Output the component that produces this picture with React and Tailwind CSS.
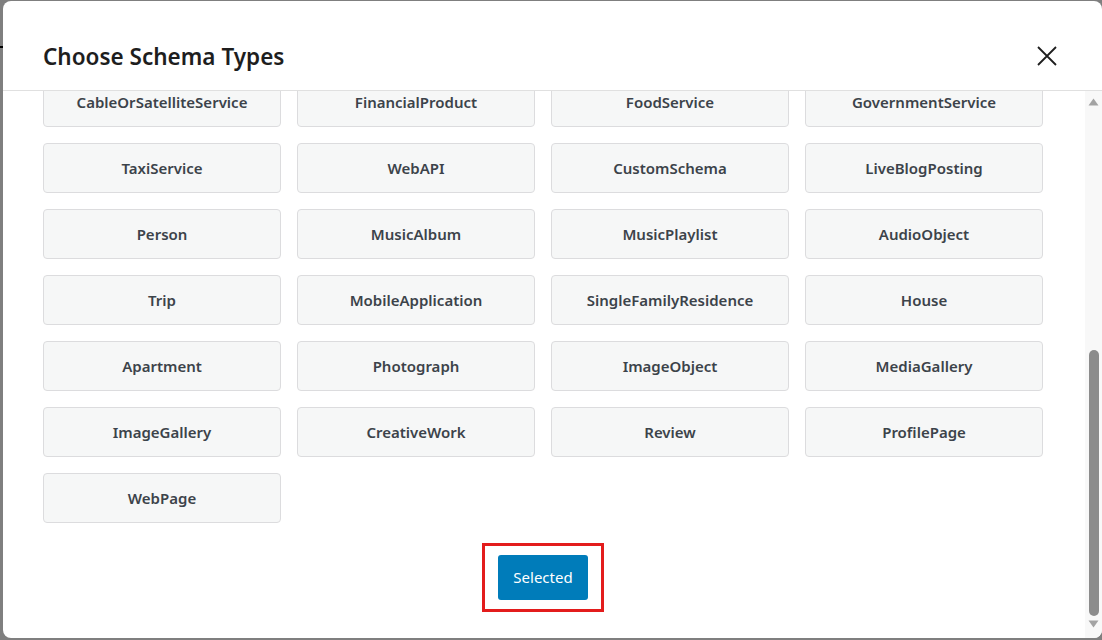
import { useLayoutEffect, useRef } from "react";

const tiposArriba = [
  "Article", "BlogPosting", "NewsArticle", "Event",
  "Product", "Recipe", "FAQPage", "HowTo",
  "LocalBusiness", "Organization", "Course", "JobPosting",
  "Book", "Movie", "VideoObject", "SoftwareApplication",
  "Service", "WebSite", "Restaurant", "Hotel",
  "BroadcastService", "Offer", "Dataset", "Place",
  "Corporation", "MedicalClinic", "Store", "EducationalOrganization",
];

const tipos = [
  "CableOrSatelliteService", "FinancialProduct", "FoodService", "GovernmentService",
  "TaxiService", "WebAPI", "CustomSchema", "LiveBlogPosting",
  "Person", "MusicAlbum", "MusicPlaylist", "AudioObject",
  "Trip", "MobileApplication", "SingleFamilyResidence", "House",
  "Apartment", "Photograph", "ImageObject", "MediaGallery",
  "ImageGallery", "CreativeWork", "Review", "ProfilePage",
  "WebPage",
];

function CloseIcon() {
  return (
    <svg width="22" height="22" viewBox="0 0 22 22" fill="none">
      <path d="M2 2 L20 20 M20 2 L2 20" stroke="#1e1e1e" strokeWidth="1.8" />
    </svg>
  );
}

// barra de scroll dibujada (la nativa queda oculta)
function Scrollbar() {
  return (
    <div className="w-[17px] shrink-0 bg-[#f8f8f8] flex flex-col items-center">
      <div className="h-[20px] w-full flex items-center justify-center pt-[2px]">
        <svg width="11" height="8" viewBox="0 0 11 8">
          <path d="M5.5 0.5 L10.5 7.5 L0.5 7.5 Z" fill="#a3a3a3" />
        </svg>
      </div>
      <div className="flex-1 w-full flex flex-col justify-end items-center pb-[2px]">
        <div className="w-[10px] h-[266px] rounded-full bg-[#8c8c8c]" />
      </div>
      <div className="h-[20px] w-full flex items-center justify-center pb-[8px]">
        <svg width="11" height="8" viewBox="0 0 11 8">
          <path d="M0.5 0.5 L10.5 0.5 L5.5 7.5 Z" fill="#a3a3a3" />
        </svg>
      </div>
    </div>
  );
}

export default function App() {
  const cuerpo = useRef(null);

  useLayoutEffect(() => {
    if (cuerpo.current) cuerpo.current.scrollTop = cuerpo.current.scrollHeight;
  }, []);

  return (
    <div
      className="relative w-[1102px] h-[640px] bg-[#7f7f7f] overflow-hidden"
      style={{ fontFamily: '"Noto Sans", "Open Sans", sans-serif' }}
    >
      {/* marca negra del fondo */}
      <div className="absolute left-0 top-[46px] w-[3px] h-[2px] bg-black" />

      {/* MODAL */}
      <div className="ml-[3px] mt-[1px] w-[1099px] h-[637px] bg-white rounded-lg overflow-hidden flex flex-col">
        <div className="h-[90px] shrink-0 border-b border-[#e0e0e0] flex items-center justify-between pl-10 pr-[44px] pt-[22px]">
          <h2 className="text-[22.5px] font-semibold text-[#1e1e1e]">Choose Schema Types</h2>
          <button className="p-0 -mt-[2px]">
            <CloseIcon />
          </button>
        </div>

        <div className="flex-1 min-h-0 flex">
          <div
            ref={cuerpo}
            className="flex-1 overflow-y-scroll [scrollbar-width:none] pl-10 pt-6 pb-[26px]"
          >
            <div className="w-[1000px] grid grid-cols-4 gap-4">
              {[...tiposArriba, ...tipos].map((t) => (
                <button
                  key={t}
                  className="h-[50px] bg-[#f6f7f7] border border-[#dcdcde] rounded-[4px] text-[15px] font-semibold text-[#3c434a]"
                >
                  {t}
                </button>
              ))}
            </div>

            <div className="w-[1000px] flex justify-center mt-5">
              <div className="border-[3px] border-[#e31c1c] px-[13px] pt-[9px] pb-[9px]">
                <button className="w-[90px] h-[45px] bg-[#007cba] rounded-[3px] text-white text-[15px]">
                  Selected
                </button>
              </div>
            </div>
          </div>
          <Scrollbar />
        </div>
      </div>
    </div>
  );
}
